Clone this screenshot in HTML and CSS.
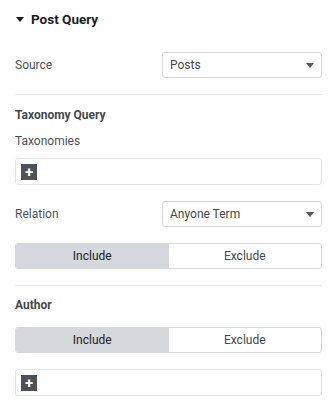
FILE: index.html
```html
<!DOCTYPE html>
<html>
<head>
<meta charset="utf-8">
<link rel="stylesheet" href="styles.css">
</head>
<body>
<div class="panel">
  <div class="section-title"><span class="caret"></span>Post Query</div>

  <div class="row row-source">
    <span class="label">Source</span>
    <div class="select"><span>Posts</span><span class="arrow"></span></div>
  </div>

  <div class="divider div-1"></div>

  <div class="heading h-tax">Taxonomy Query</div>
  <div class="label l-tax">Taxonomies</div>
  <div class="repeater r-tax"><span class="plus">+</span></div>

  <div class="row row-rel">
    <span class="label">Relation</span>
    <div class="select"><span>Anyone Term</span><span class="arrow"></span></div>
  </div>

  <div class="toggle t-1">
    <div class="opt active">Include</div>
    <div class="opt">Exclude</div>
  </div>

  <div class="divider div-2"></div>

  <div class="heading h-author">Author</div>

  <div class="toggle t-2">
    <div class="opt active">Include</div>
    <div class="opt">Exclude</div>
  </div>

  <div class="repeater r-author"><span class="plus">+</span></div>
</div>
</body>
</html>
```

FILE: styles.css
```css
html, body {
  margin: 0;
  padding: 0;
  background: #fff;
}
body {
  font-family: Roboto, "Liberation Sans", Arial, sans-serif;
  color: #4a4f55;
}
.panel {
  display: flex;
  flex-direction: column;
  padding: 0 11px 0 15px;
}
.section-title {
  height: 38px;
  display: flex;
  align-items: center;
  font-weight: 700;
  font-size: 13.5px;
  color: #1a1c1e;
}
.caret {
  width: 0;
  height: 0;
  border-left: 4px solid transparent;
  border-right: 4px solid transparent;
  border-top: 5px solid #1a1c1e;
  margin: 0 7px 0 1px;
}
.row {
  display: flex;
  align-items: center;
  justify-content: space-between;
  height: 26px;
}
.label {
  font-size: 12px;
  line-height: 16px;
  color: #4f5358;
}
.select {
  box-sizing: border-box;
  width: 160px;
  height: 26px;
  border: 1px solid #d5d8dc;
  border-radius: 3px;
  display: flex;
  align-items: center;
  justify-content: space-between;
  padding: 0 7px 0 7px;
  font-size: 12px;
  color: #44484d;
}
.arrow {
  width: 0;
  height: 0;
  border-left: 4px solid transparent;
  border-right: 4px solid transparent;
  border-top: 5px solid #55595e;
}
.row-source { margin-top: 14px; }
.divider {
  height: 0;
  border-top: 1px solid #e6e8ea;
}
.div-1 { margin-top: 16px; }
.heading {
  font-size: 12px;
  line-height: 16px;
  font-weight: 700;
  color: #44484d;
}
.h-tax { margin-top: 12px; }
.l-tax { margin-top: 10px; }
.repeater {
  box-sizing: border-box;
  height: 27px;
  border: 1px solid #e2e4e7;
  border-radius: 3px;
  display: flex;
  align-items: center;
  padding-left: 5px;
}
.r-tax { margin-top: 9px; }
.plus {
  width: 16px;
  height: 16px;
  background: #4b5259;
  color: #fff;
  font-size: 15px;
  line-height: 16px;
  text-align: center;
  font-weight: 700;
}
.row-rel { margin-top: 16px; }
.toggle {
  box-sizing: border-box;
  height: 26px;
  border: 1px solid #d5d8dc;
  border-radius: 3px;
  display: flex;
  overflow: hidden;
}
.opt {
  flex: 1;
  display: flex;
  align-items: center;
  justify-content: center;
  font-size: 12px;
  color: #44484d;
}
.opt.active {
  background: #d5d8dc;
  color: #1f2124;
}
.t-1 { margin-top: 16px; }
.div-2 { margin-top: 16px; }
.h-author { margin-top: 11px; }
.t-2 { margin-top: 14px; }
.r-author { margin-top: 16px; }
```
